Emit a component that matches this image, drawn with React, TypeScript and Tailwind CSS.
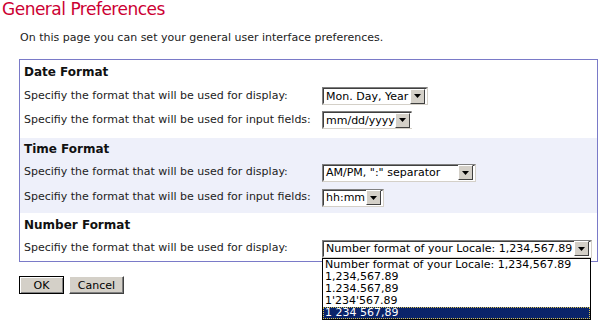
import React from "react";

const font = { fontFamily: '"DejaVu Sans", Verdana, sans-serif' };

function Arrow() {
  return (
    <span className="flex h-[15px] w-[15px] shrink-0 items-center justify-center border border-t-white border-l-white border-r-[#404040] border-b-[#404040] bg-[#d4d0c8]">
      <svg width="7" height="4" viewBox="0 0 7 4">
        <path d="M0 0h7L3.5 4z" fill="#000" />
      </svg>
    </span>
  );
}

function Select({ value, width }: { value: string; width: string }) {
  return (
    <div className={`flex h-[18px] items-center border border-t-[#808080] border-l-[#808080] border-r-[#d4d0c8] border-b-[#d4d0c8] bg-white ${width}`}>
      <div className="flex h-full flex-1 items-center border border-t-[#404040] border-l-[#404040] border-r-white border-b-white pr-[1px]">
        <span className="flex-1 truncate pl-[2px] text-[11px] leading-none text-black">{value}</span>
        <Arrow />
      </div>
    </div>
  );
}

function Row({ label, children, h = "h-[24px]" }: { label: string; children: React.ReactNode; h?: string }) {
  return (
    <div className={`flex items-center ${h}`}>
      <span className="w-[298px] shrink-0 text-[11px] text-[#222]">{label}</span>
      {children}
    </div>
  );
}

const numberOptions = [
  "Number format of your Locale: 1,234,567.89",
  "1,234,567.89",
  "1.234.567,89",
  "1'234'567.89",
  "1 234 567,89",
];

export default function App() {
  return (
    <div className="h-[325px] w-[600px] overflow-hidden bg-white" style={font}>
      <h1 className="pl-[2px] text-[17px] leading-[19px] tracking-[-0.5px] text-[#cc0033]">General Preferences</h1>
      <p className="mt-[12px] pl-[20px] text-[11px] leading-[13px] text-[#222]">
        On this page you can set your general user interface preferences.
      </p>

      <div className="ml-[19px] mt-[15px] w-[579px] border border-[#7a7ac8]">
        {/* Date */}
        <div className="px-[4px] pb-[6px]">
          <div className="flex h-[24px] items-center text-[12px] font-bold text-[#111]">Date Format</div>
          <Row label="Specifiy the format that will be used for display:">
            <Select value="Mon. Day, Year" width="w-[106px]" />
          </Row>
          <Row label="Specifiy the format that will be used for input fields:">
            <Select value="mm/dd/yyyy" width="w-[90px]" />
          </Row>
        </div>

        {/* Time */}
        <div className="bg-[#eef0fa] px-[4px] pb-[3px]">
          <div className="flex h-[22px] items-center text-[12px] font-bold text-[#111]">Time Format</div>
          <Row label="Specifiy the format that will be used for display:" h="h-[25px]">
            <Select value={'AM/PM, ":" separator'} width="w-[154px]" />
          </Row>
          <Row label="Specifiy the format that will be used for input fields:" h="h-[25px]">
            <Select value="hh:mm" width="w-[62px]" />
          </Row>
        </div>

        {/* Number */}
        <div className="px-[4px]">
          <div className="flex h-[23px] items-center text-[12px] font-bold text-[#111]">Number Format</div>
          <Row label="Specifiy the format that will be used for display:" h="h-[25px]">
            <div className="relative">
              <Select value="Number format of your Locale: 1,234,567.89" width="w-[270px]" />
              <ul className="absolute left-0 top-[18px] z-10 w-[269px] border border-black bg-white">
                {numberOptions.map((o, i) => (
                  <li
                    key={o}
                    className={
                      i === 4
                        ? "h-[12px] bg-[#0a246a] pl-[2px] text-[11px] leading-[12px] text-white outline-1 outline-dotted outline-[#d4c050] -outline-offset-1"
                        : "h-[12px] pl-[2px] text-[11px] leading-[12px] text-black"
                    }
                  >
                    {o}
                  </li>
                ))}
              </ul>
            </div>
          </Row>
        </div>
      </div>

      <div className="ml-[19px] mt-[14px] flex gap-[5px]">
        <button className="h-[18px] w-[45px] border border-black bg-[#d4d0c8] text-[11px] leading-none text-black shadow-[inset_1px_1px_0_#fff,inset_-1px_-1px_0_#808080]">
          OK
        </button>
        <button className="h-[18px] w-[55px] border border-t-white border-l-white border-r-[#404040] border-b-[#404040] bg-[#d4d0c8] text-[11px] leading-none text-black shadow-[inset_-1px_-1px_0_#808080]">
          Cancel
        </button>
      </div>
    </div>
  );
}
